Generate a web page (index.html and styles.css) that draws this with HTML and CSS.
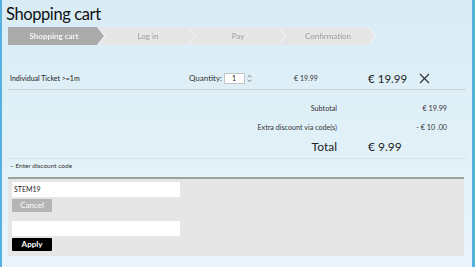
FILE: index.html
```html
<!DOCTYPE html>
<html>
<head>
<meta charset="utf-8">
<link rel="stylesheet" href="styles.css">
</head>
<body>
<div class="page">
  <h1 class="title">Shopping cart</h1>
  <div class="steps">
    <div class="step first"><div class="chev active">Shopping cart</div></div>
    <div class="step"><div class="chev">Log in</div></div>
    <div class="step"><div class="chev">Pay</div></div>
    <div class="step"><div class="chev">Confirmation</div></div>
  </div>
  <div class="item-row">
    <div class="item-name">Individual Ticket &gt;=1m</div>
    <div class="qty">
      <span class="qty-label">Quantity:</span>
      <span class="qty-input">1</span>
      <svg class="spin" width="5" height="9" viewBox="0 0 5 9"><path d="M0.8 3.2 L2.5 1.3 L4.2 3.2 M0.8 5.8 L2.5 7.7 L4.2 5.8" fill="none" stroke="#777" stroke-width="0.9"/></svg>
    </div>
    <div class="unit-price">€ 19.99</div>
    <div class="line-price">€ 19.99</div>
    <svg class="remove" width="11" height="11" viewBox="0 0 11 11"><path d="M1 1 L10 10 M10 1 L1 10" stroke="#333" stroke-width="1.2" fill="none"/></svg>
  </div>
  <div class="totals">
    <div class="tot-row"><span class="tot-label">Subtotal</span><span class="tot-val">€ 19.99</span></div>
    <div class="tot-row"><span class="tot-label">Extra discount via code(s)</span><span class="tot-val">- € 10 .00</span></div>
    <div class="tot-row total"><span class="tot-label">Total</span><span class="tot-val">€ 9.99</span></div>
  </div>
  <div class="disc-toggle">− Enter discount code</div>
  <div class="disc-panel">
    <div class="field">STEM19</div>
    <div class="btn cancel">Cancel</div>
    <div class="field empty"></div>
    <div class="btn apply">Apply</div>
  </div>
</div>
</body>
</html>
```
FILE: styles.css
```css
html, body { margin: 0; padding: 0; }
body {
  width: 475px;
  height: 267px;
  overflow: hidden;
  font-family: Lato, "Open Sans", sans-serif;
  color: #222;
}
.page {
  box-sizing: border-box;
  width: 475px;
  height: 267px;
  border-left: 2px solid #55b2df;
  border-right: 3px solid #55b2df;
  background: linear-gradient(180deg, #d9ecf6 0%, #e2f1f8 60%, #e9f5fa 100%);
  padding: 0 6px 0 6px;
}
.title {
  margin: 0;
  padding-top: 3px;
  margin-left: -2px;
  font-size: 16.5px;
  letter-spacing: -0.4px;
  line-height: 22px;
  font-weight: 400;
  color: #111;
}
.steps {
  display: flex;
  margin-top: 2px;
  height: 18px;
}
.step {
  width: 96px;
  height: 18px;
  margin-right: -6px;
  filter: drop-shadow(1px 0 0 #f6f6f6);
}
.step:nth-child(2) { margin-left: 1px; }
.chev {
  width: 96px;
  height: 18px;
  background: #e6e6e6;
  color: #9c9c9c;
  font-size: 8px;
  line-height: 18px;
  text-align: center;
  padding: 0 4px 0 6px;
  box-sizing: border-box;
  clip-path: polygon(0 0, 89px 0, 96px 50%, 89px 100%, 0 100%, 7px 50%);
}
.chev.active {
  background: #ababab;
  color: #f4f4f4;
  font-weight: 700;
  padding-left: 0;
  clip-path: polygon(0 0, 89px 0, 96px 50%, 89px 100%, 0 100%);
}
.item-row {
  display: flex;
  align-items: center;
  height: 20px;
  margin-top: 23px;
  border-bottom: 1px solid #c8d6dd;
  padding-bottom: 1px;
}
.item-name {
  font-size: 7px;
  padding-left: 2px;
  width: 179px;
}
.qty {
  display: flex;
  align-items: center;
}
.qty-label { font-size: 8px; color: #333; }
.qty-input {
  box-sizing: border-box;
  width: 21px;
  height: 11px;
  margin-left: 2px;
  background: #fff;
  border: 1px solid #c4c4c4;
  font-size: 7px;
  line-height: 9px;
  padding-left: 7px;
}
.spin { margin-left: 2px; }
.unit-price {
  font-size: 7px;
  margin-left: 42px;
  width: 74px;
  color: #333;
}
.line-price {
  font-size: 11.5px;
  width: 51px;
}
.totals {
  padding-top: 9px;
  border-bottom: 1px solid #d3e3eb;
  padding-bottom: 3px;
}
.tot-row {
  display: flex;
  align-items: center;
  height: 19px;
  font-size: 7.2px;
  color: #333;
}
.tot-label {
  width: 329px;
  text-align: right;
}
.tot-val {
  width: 110px;
  text-align: right;
}
.tot-row.total { font-size: 12px; color: #222; height: 18px; }
.tot-row.total .tot-val { text-align: left; padding-left: 31px; box-sizing: border-box; }
.disc-toggle {
  font-size: 6.5px;
  color: #333;
  padding-left: 2px;
  height: 13px;
  line-height: 13px;
}
.disc-panel {
  margin-top: 5px;
  border-top: 2px solid #a0a0a0;
  background: #e6e6e6;
  height: 79px;
  box-sizing: border-box;
  padding: 3px 0 0 4px;
  margin-right: 2px;
}
.field {
  box-sizing: border-box;
  width: 168px;
  height: 15px;
  background: #fff;
  font-size: 7px;
  line-height: 15px;
  padding-left: 2px;
  color: #222;
}
.btn {
  width: 40px;
  height: 13px;
  margin-top: 2px;
  border-radius: 1px;
  font-size: 8px;
  line-height: 13px;
  text-align: center;
  color: #fff;
}
.cancel { background: #b4b4b4; margin-bottom: 9px; }
.apply { background: #000; font-weight: 700; }
```
